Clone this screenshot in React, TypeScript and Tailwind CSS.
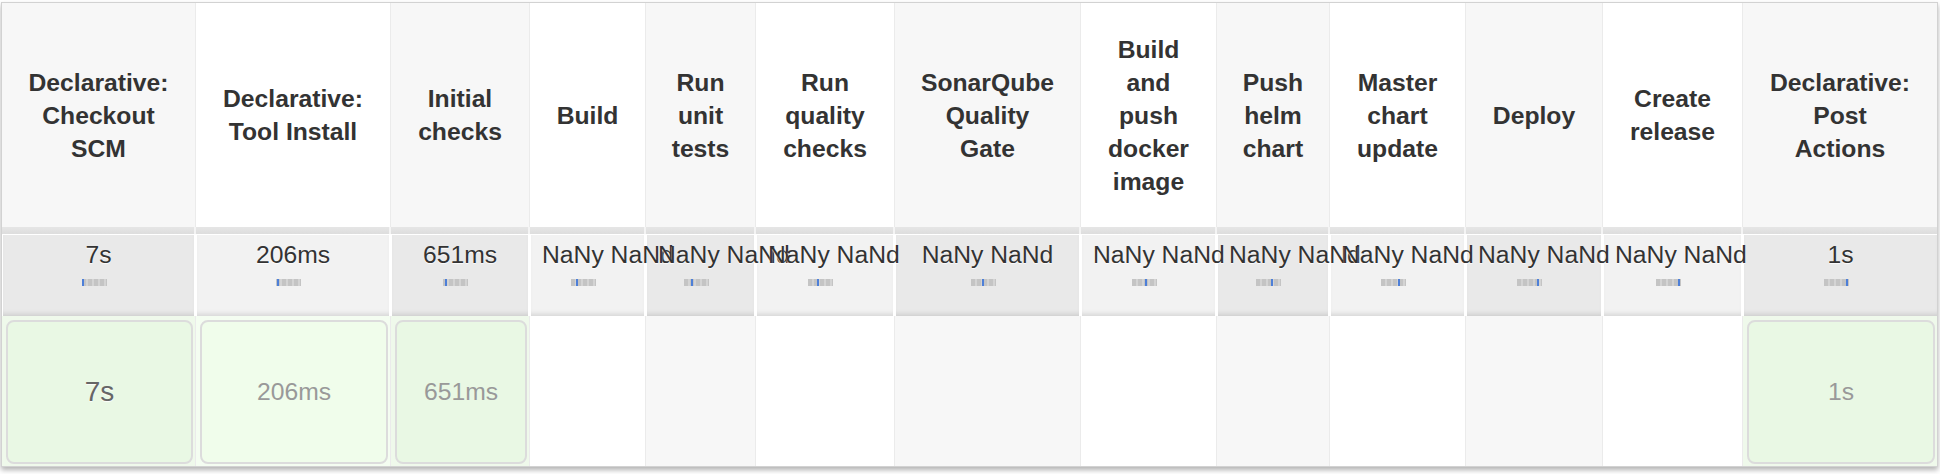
import React from "react";

type Col = {
  w: string;
  even: boolean;
  title: string[];
  avg: string;
  tick: number;
  build?: { text: string; big?: boolean };
};

const cols: Col[] = [
  { w: "w-[194px]", even: true, title: ["Declarative:", "Checkout", "SCM"], avg: "7s", tick: 0, build: { text: "7s", big: true } },
  { w: "w-[195px]", even: false, title: ["Declarative:", "Tool Install"], avg: "206ms", tick: 1, build: { text: "206ms" } },
  { w: "w-[139px]", even: true, title: ["Initial", "checks"], avg: "651ms", tick: 2, build: { text: "651ms" } },
  { w: "w-[116px]", even: false, title: ["Build"], avg: "NaNy NaNd", tick: 5 },
  { w: "w-[110px]", even: true, title: ["Run", "unit", "tests"], avg: "NaNy NaNd", tick: 7 },
  { w: "w-[139px]", even: false, title: ["Run", "quality", "checks"], avg: "NaNy NaNd", tick: 9 },
  { w: "w-[186px]", even: true, title: ["SonarQube", "Quality", "Gate"], avg: "NaNy NaNd", tick: 11 },
  { w: "w-[136px]", even: false, title: ["Build", "and", "push", "docker", "image"], avg: "NaNy NaNd", tick: 13 },
  { w: "w-[113px]", even: true, title: ["Push", "helm", "chart"], avg: "NaNy NaNd", tick: 15 },
  { w: "w-[136px]", even: false, title: ["Master", "chart", "update"], avg: "NaNy NaNd", tick: 17 },
  { w: "w-[137px]", even: true, title: ["Deploy"], avg: "NaNy NaNd", tick: 20 },
  { w: "w-[140px]", even: false, title: ["Create", "release"], avg: "NaNy NaNd", tick: 22 },
  { w: "w-[194px]", even: true, title: ["Declarative:", "Post", "Actions"], avg: "1s", tick: 22, build: { text: "1s" } },
];

function Column({ c, last }: { c: Col; last: boolean }) {
  const sep = last ? "" : "border-r border-[#ebebeb]";
  return (
    <div className={`${c.w} shrink-0 flex flex-col`}>
      {/* header */}
      <div
        className={`h-[224px] flex flex-col items-center justify-center text-center font-bold text-[24.7px] leading-[33px] text-[#333333] whitespace-nowrap ${sep} ${
          c.even ? "bg-[#f7f7f7]" : "bg-white"
        }`}
      >
        {c.title.map((t, i) => (
          <div key={i}>{t}</div>
        ))}
      </div>
      {/* band */}
      <div
        className={`h-[7px] bg-gradient-to-b from-[#e6e6e6] to-[#dddddd] ${last ? "" : "border-r-2 border-[#f4f4f4]"}`}
      />
      {/* average */}
      <div className={`h-[82px] bg-white pt-[1px] pl-[1px] ${last ? "" : "pr-[2px]"}`}>
        <div
          className={`h-full px-[11px] pt-[6px] text-center whitespace-nowrap shadow-[inset_0_-5px_5px_-3px_rgba(0,0,0,0.12)] ${
            c.even ? "bg-[#e9e9e9]" : "bg-[#f2f2f2]"
          }`}
        >
          <div className="relative z-10 text-[24.7px] leading-[28px] text-[#333333] [text-shadow:0_1px_1px_rgba(255,255,255,0.9)]">
            {c.avg}
          </div>
          <div className="mt-[10px] flex justify-center">
            <div className="w-[34px]">
              <div className="relative w-[25px] h-[7px] bg-[repeating-linear-gradient(90deg,#c4c4c4_0px,#c4c4c4_4px,#d4d4d4_4px,#d4d4d4_6px)]">
                <div className="absolute top-0 h-full w-[2px] bg-[#4d7fd8]" style={{ left: c.tick }} />
              </div>
            </div>
          </div>
        </div>
      </div>
      {/* build row */}
      <div
        className={`h-[150px] pt-[4px] pb-[2px] pl-[4px] pr-[2px] ${sep} ${
          c.build
            ? c.even
              ? "bg-[#eff9eb]"
              : "bg-[#f4fdf1]"
            : c.even
            ? "bg-[#f7f7f7]"
            : "bg-white"
        }`}
      >
        {c.build && (
          <div
            className={`h-full rounded-[8px] border-2 border-[#dcdcdc] flex items-center justify-center ${
              c.even ? "bg-[#e9f8e4]" : "bg-[#f0fdeb]"
            }`}
          >
            <span
              className={
                c.build.big
                  ? "text-[28px] text-[#666666] [text-shadow:0_1px_1px_rgba(255,255,255,0.9)]"
                  : "text-[24.7px] text-[#999999]"
              }
            >
              {c.build.text}
            </span>
          </div>
        )}
      </div>
    </div>
  );
}

export default function App() {
  return (
    <div className="w-[1940px] h-[474px] bg-white [font-family:'Liberation_Sans',Arial,sans-serif] pt-[2px] pl-[1px]">
      <div className="inline-flex border border-[#d2d2d2] shadow-[0_3px_5px_rgba(0,0,0,0.3)]">
        {cols.map((c, i) => (
          <Column key={i} c={c} last={i === cols.length - 1} />
        ))}
      </div>
    </div>
  );
}
